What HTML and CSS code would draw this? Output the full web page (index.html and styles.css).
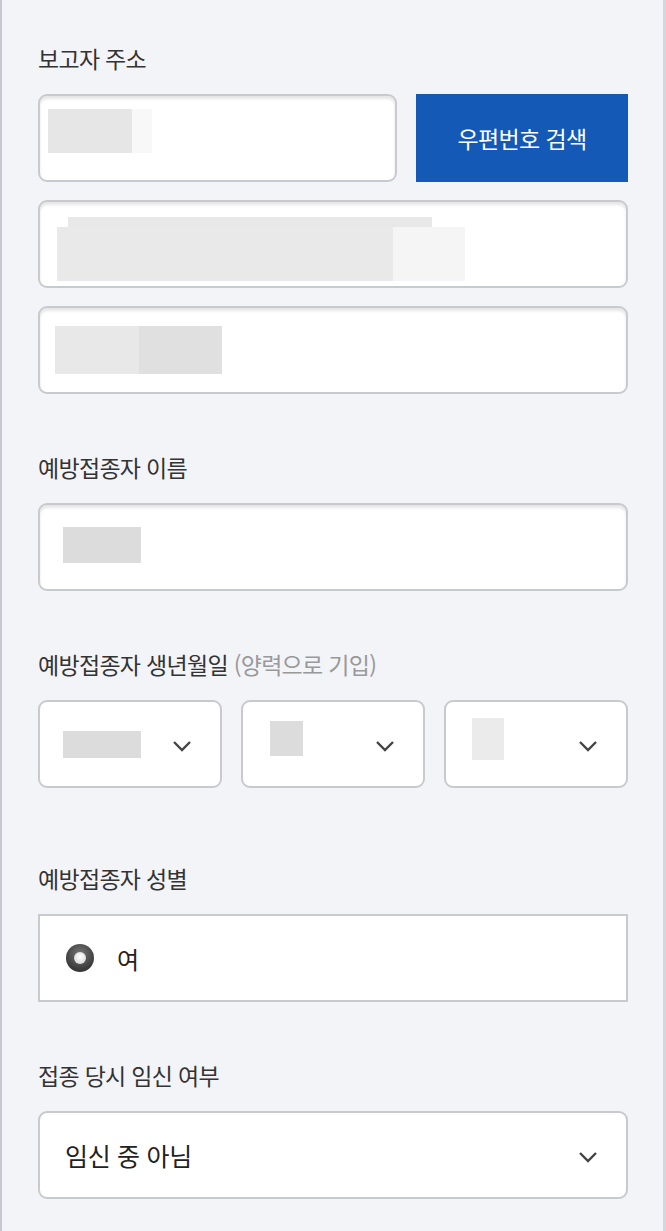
FILE: index.html
```html
<!DOCTYPE html>
<html lang="ko">
<head>
    <meta charset="UTF-8">
    <meta name="viewport" content="width=device-width, initial-scale=1.0">
    <title>이상반응 신고</title>
    <link rel="stylesheet" href="styles.css">
</head>
<body>
    <div class="page">
        <div class="field">
            <div class="label">보고자 주소</div>
            <div class="zip-row">
                <div class="box zip-box">
                    <span class="blur zip-a"></span><span class="blur zip-b"></span>
                </div>
                <button class="zip-btn">우편번호 검색</button>
            </div>
            <div class="box addr-box">
                <div class="addr-strip"></div>
                <div class="addr-line">
                    <span class="blur addr-a"></span><span class="blur addr-b"></span>
                </div>
            </div>
            <div class="box addr-box detail">
                <span class="blur det-a"></span><span class="blur det-b"></span>
            </div>
        </div>

        <div class="field">
            <div class="label">예방접종자 이름</div>
            <div class="box name-box">
                <span class="blur name-a"></span>
            </div>
        </div>

        <div class="field">
            <div class="label">예방접종자 생년월일 <span class="hint">(양력으로 기입)</span></div>
            <div class="date-row">
                <div class="box select">
                    <span class="blur year"></span>
                    <svg class="chev" width="20" height="12" viewBox="0 0 20 12"><polyline points="2,2 10,10 18,2" fill="none" stroke="#444" stroke-width="2.4"/></svg>
                </div>
                <div class="box select">
                    <span class="blur month"></span>
                    <svg class="chev" width="20" height="12" viewBox="0 0 20 12"><polyline points="2,2 10,10 18,2" fill="none" stroke="#444" stroke-width="2.4"/></svg>
                </div>
                <div class="box select">
                    <span class="blur day"></span>
                    <svg class="chev" width="20" height="12" viewBox="0 0 20 12"><polyline points="2,2 10,10 18,2" fill="none" stroke="#444" stroke-width="2.4"/></svg>
                </div>
            </div>
        </div>

        <div class="field gender">
            <div class="label">예방접종자 성별</div>
            <div class="radio-box">
                <span class="radio"></span>
                <span class="radio-text">여</span>
            </div>
        </div>

        <div class="field">
            <div class="label">접종 당시 임신 여부</div>
            <div class="box select wide">
                <span class="value">임신 중 아님</span>
                <svg class="chev" width="20" height="12" viewBox="0 0 20 12"><polyline points="2,2 10,10 18,2" fill="none" stroke="#444" stroke-width="2.4"/></svg>
            </div>
        </div>
    </div>
</body>
</html>
```

FILE: styles.css
```css
body {
    margin: 0;
    background-color: #f3f4f8;
    font-family: "Noto Sans CJK KR", "Noto Sans", sans-serif;
    color: #333;
}

.page {
    width: 666px;
    min-height: 1231px;
    box-sizing: border-box;
    padding: 43px 35px 0 36px;
    border-left: 2px solid #c6c7d1;
    border-right: 3px solid #d6d7de;
}

.field + .field {
    margin-top: 58px;
}

.field.gender {
    margin-top: 75px;
}

.label {
    font-size: 23px;
    line-height: 30px;
    letter-spacing: -0.7px;
    color: #333;
    margin-bottom: 21px;
}

.hint {
    color: #999;
}

.box {
    box-sizing: border-box;
    height: 88px;
    background: white;
    border: 2px solid #c9cad0;
    border-radius: 9px;
    box-shadow: inset 0 3px 3px rgba(0,0,0,0.1);
}

.blur {
    display: block;
    background: #e6e6e6;
}

/* address */
.zip-row {
    display: flex;
    gap: 19px;
    margin-bottom: 18px;
}

.zip-box {
    width: 359px;
    display: flex;
    align-items: flex-start;
    padding: 13px 0 0 8px;
}

.zip-a { width: 84px; height: 44px; }
.zip-b { width: 20px; height: 44px; background: #f8f8f8; }

.zip-btn {
    flex: 1;
    height: 88px;
    border: none;
    border-radius: 0;
    background-color: #1459b6;
    color: white;
    font-family: inherit;
    font-size: 23px;
    letter-spacing: -0.6px;
}

.addr-box {
    padding: 15px 0 0 17px;
}

.addr-box + .addr-box {
    margin-top: 18px;
}

.addr-strip {
    width: 364px;
    height: 10px;
    margin-left: 11px;
    background: #e8e8e8;
}

.addr-line {
    display: flex;
}

.addr-a { width: 336px; height: 54px; background: #e9e9e9; }
.addr-b { width: 72px; height: 54px; background: #f5f5f5; }

.addr-box.detail {
    display: flex;
    padding: 18px 0 0 15px;
}

.det-a { width: 84px; height: 48px; background: #e8e8e8; }
.det-b { width: 83px; height: 48px; background: #e0e0e0; }

/* name */
.name-box {
    padding: 22px 0 0 23px;
}

.name-a { width: 78px; height: 36px; background: #dcdcdc; }

/* birth date */
.date-row {
    display: flex;
    gap: 19px;
}

.select {
    position: relative;
    flex: 1;
    box-shadow: none;
}

.chev {
    position: absolute;
    right: 28px;
    top: 38px;
}

.year { width: 78px; height: 27px; margin: 29px 0 0 23px; background: #dcdcdc; }
.month { width: 33px; height: 35px; margin: 19px 0 0 27px; background: #dcdcdc; }
.day { width: 32px; height: 42px; margin: 16px 0 0 26px; background: #ebebeb; }

/* gender */
.radio-box {
    box-sizing: border-box;
    height: 88px;
    background: white;
    border: 2px solid #c9cad0;
    display: flex;
    align-items: center;
    padding-left: 26px;
}

.radio {
    width: 28px;
    height: 28px;
    border-radius: 50%;
    background: radial-gradient(circle at 50% 35%, #777, #3a3a3a 70%);
    position: relative;
    margin-right: 23px;
}

.radio::after {
    content: "";
    position: absolute;
    left: 8px;
    top: 8px;
    width: 12px;
    height: 12px;
    border-radius: 50%;
    background: radial-gradient(circle at 50% 40%, #fff, #cfcfcf);
}

.radio-text {
    font-size: 24px;
    color: #222;
}

/* pregnancy */
.select.wide {
    display: flex;
    align-items: center;
    padding-left: 25px;
}

.value {
    font-size: 25px;
    letter-spacing: -0.3px;
    color: #222;
}
```
